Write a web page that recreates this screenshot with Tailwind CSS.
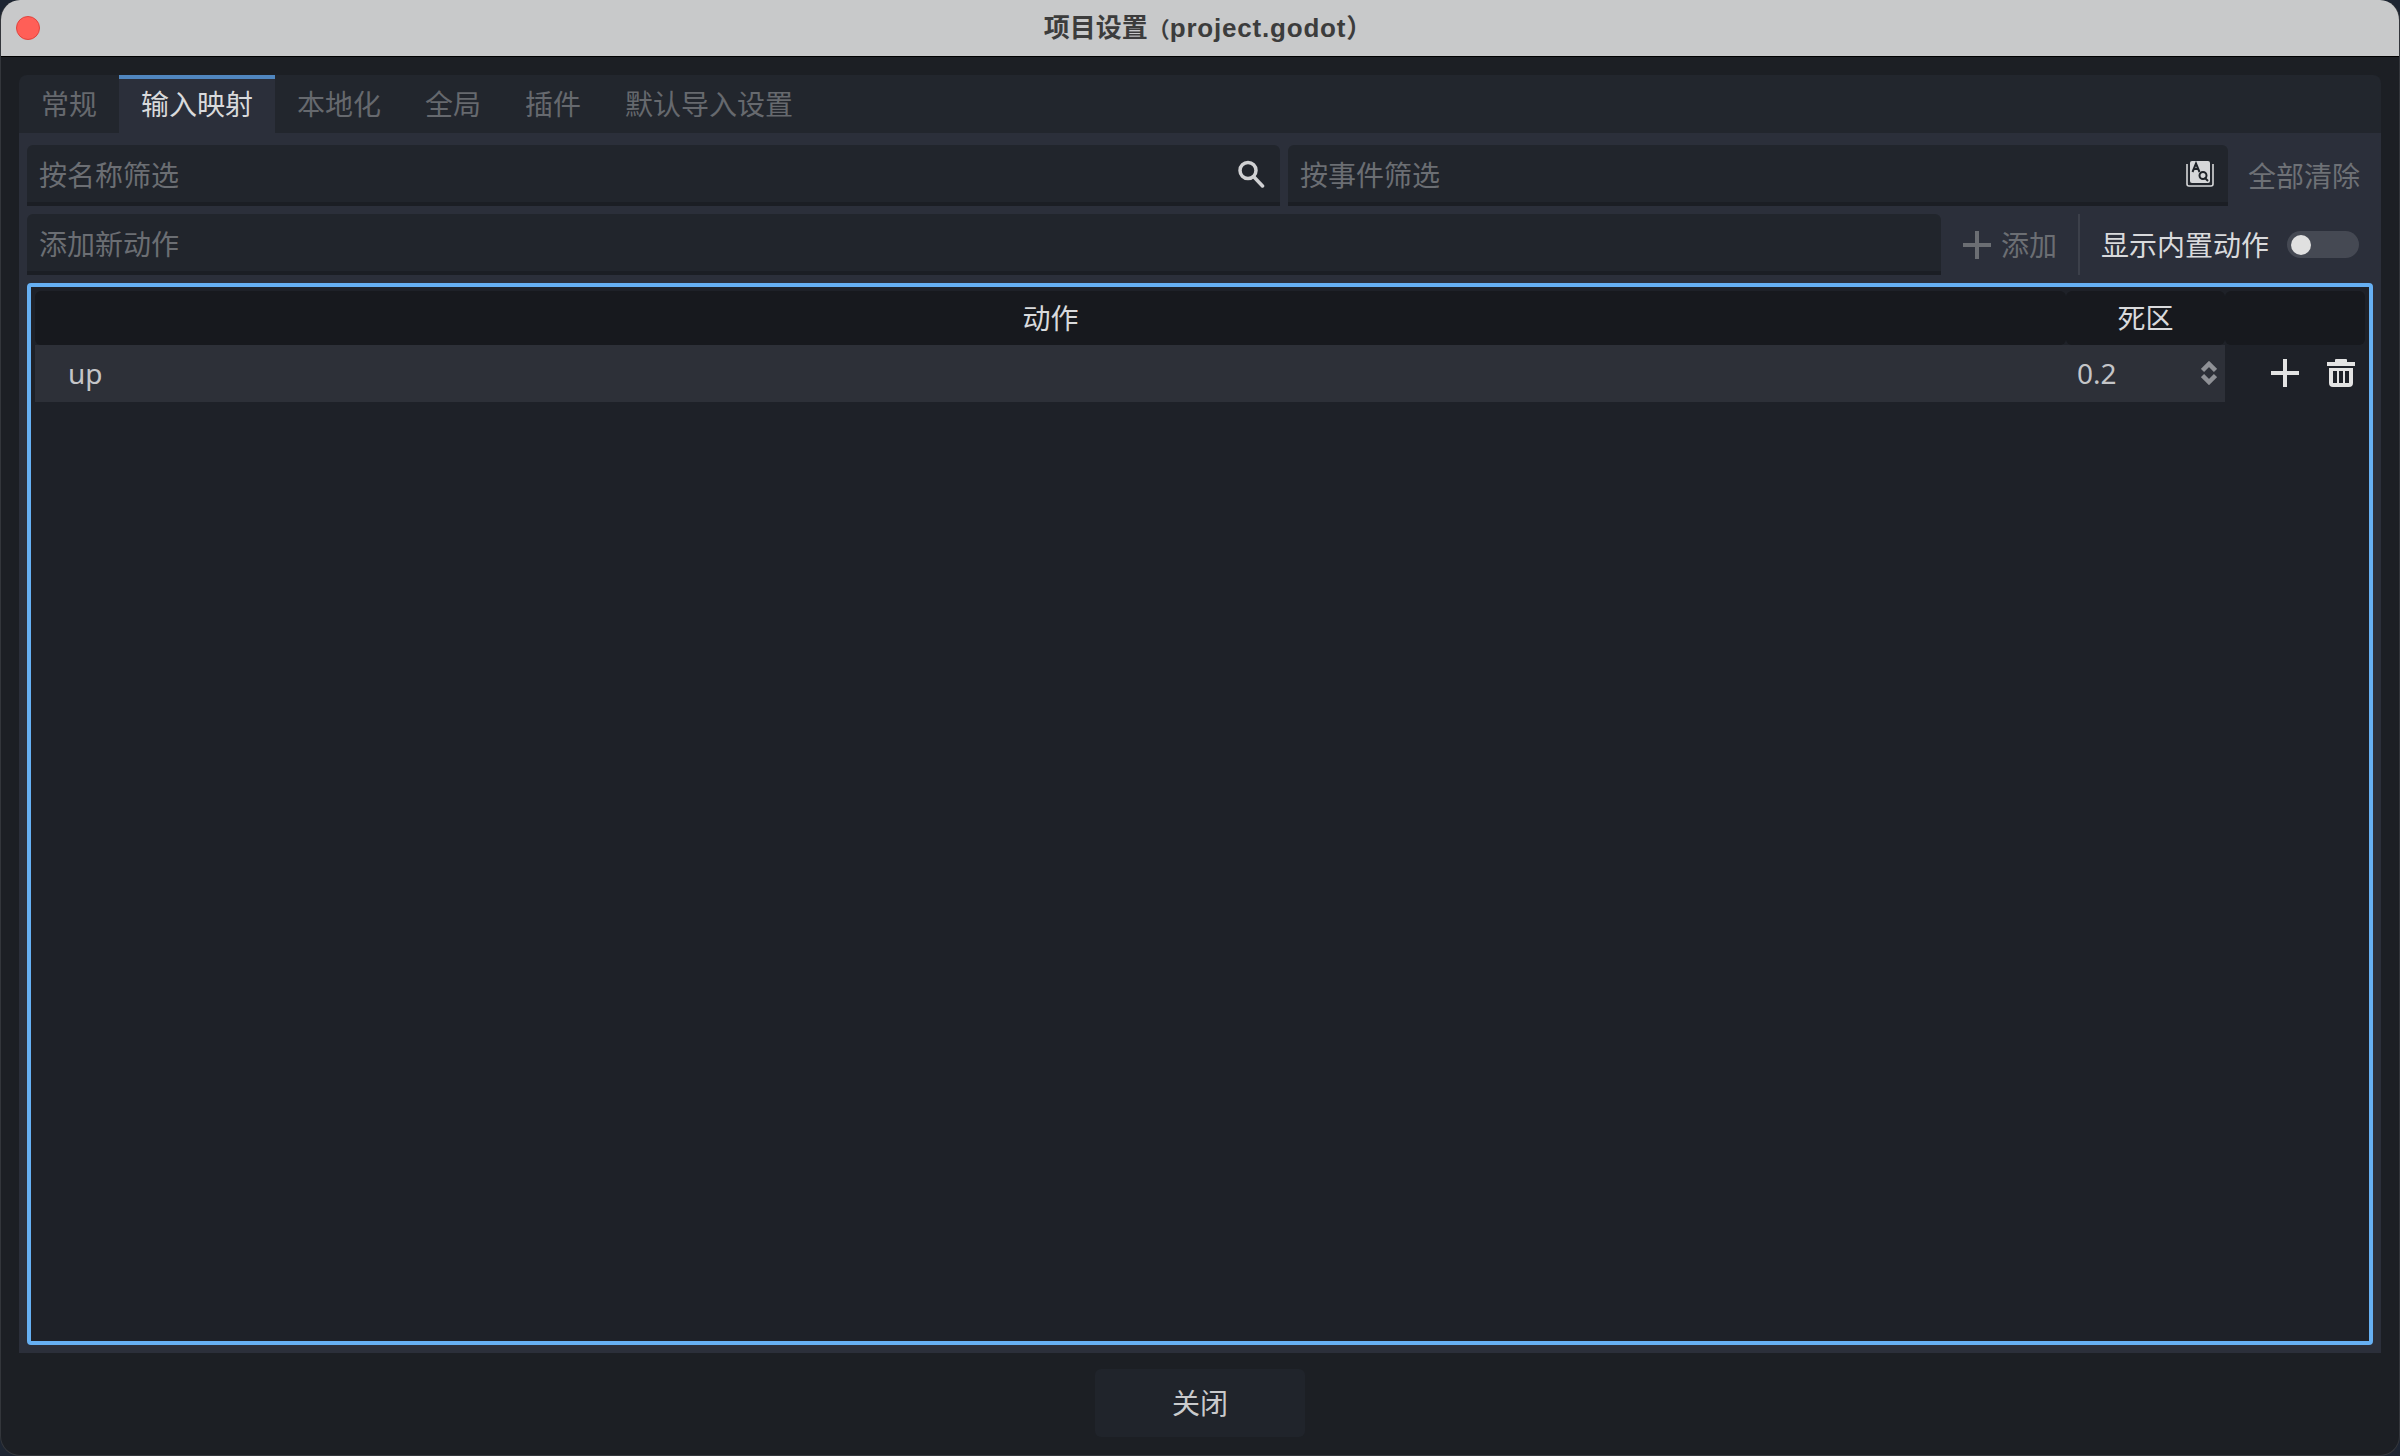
<!DOCTYPE html>
<html lang="zh-CN">
<head>
<meta charset="utf-8">
<script src="https://cdn.jsdelivr.net/npm/@tailwindcss/browser@4"></script>
</head>
<body class="bg-[#1d2532] font-['Noto_Sans','Noto_Sans_CJK_SC',sans-serif] overflow-hidden">
<div class="w-[2400px] h-[1456px] flex flex-col rounded-[20px] overflow-hidden bg-[#1c1f24] text-[28px] leading-none border-b border-x border-[#33363b]">
  <header class="relative h-[57px] shrink-0 flex items-center justify-center bg-[#c8c9ca] border-b border-black -mx-px">
    <span class="absolute left-[16px] top-[16px] w-[24px] h-[24px] rounded-full bg-[#ff5f57] border border-[#e0443e]"></span>
    <span class="ml-[16px] text-[26px] font-bold text-[#3c3c3c] font-['Liberation_Sans','Noto_Sans_CJK_SC',sans-serif]">项目设置<span class="text-[22px]">（</span><span class="tracking-[0.8px]">project.godot</span>）</span>
  </header>
  <div class="flex-1 flex flex-col px-[18px] pt-[18px] pb-[18px]">
    <nav class="h-[58px] shrink-0 flex bg-[#22262d] rounded-t-[8px] text-[#66696e]">
      <div class="px-[22px] flex items-center">常规</div>
      <div class="px-[22px] pb-[4px] flex items-center bg-[#2b2f3a] border-t-4 border-[#5086bf] text-[#d9dadc]">输入映射</div>
      <div class="px-[22px] flex items-center">本地化</div>
      <div class="px-[22px] flex items-center">全局</div>
      <div class="px-[22px] flex items-center">插件</div>
      <div class="px-[22px] flex items-center">默认导入设置</div>
    </nav>
    <main class="h-[1220px] flex flex-col bg-[#2b2f3a] px-[8px] pt-[12px] pb-[8px] gap-[8px]">
      <div class="h-[61px] shrink-0 flex gap-[8px]">
        <div class="w-[1253px] flex items-center justify-between bg-[#21252c] border-b-4 border-[#1b1e24] rounded-t-[6px] pt-[3px] pl-[12px] pr-[15px] text-[#6b6e73]">
          <span>按名称筛选</span>
          <svg class="w-[28px] h-[28px] -mt-[3px]" viewBox="0 0 28 28" fill="none"><circle cx="11" cy="10.5" r="8" stroke="#d0d1d3" stroke-width="3.5"/><path d="M16.5 16.5 25.5 26" stroke="#d0d1d3" stroke-width="3.5" stroke-linecap="round"/></svg>
        </div>
        <div class="w-[940px] flex items-center justify-between bg-[#21252c] border-b-4 border-[#1b1e24] rounded-t-[6px] pt-[3px] pl-[12px] pr-[14px] text-[#6b6e73]">
          <span>按事件筛选</span>
          <svg class="w-[28px] h-[26px] -mt-[3px]" viewBox="0 0 28 26" fill="none"><path d="M1 3v20a2 2 0 0 0 2 2h22a2 2 0 0 0 2-2V3" stroke="#d6d7d9" stroke-width="1.6"/><rect x="4" y="0" width="20" height="22" rx="2" fill="#d6d7d9"/><path d="M6.5 11 10 2.5 13.5 11M8 8h4" stroke="#1f2329" stroke-width="2"/><circle cx="17" cy="14.5" r="3.5" stroke="#1f2329" stroke-width="2"/><path d="M18.5 16.5 22 20" stroke="#1f2329" stroke-width="2"/></svg>
        </div>
        <div class="flex-1 flex items-center justify-end pr-[13px] text-[#6e7176]">全部清除</div>
      </div>
      <div class="h-[61px] shrink-0 flex">
        <div class="w-[1914px] flex items-center bg-[#21252c] border-b-4 border-[#1b1e24] rounded-t-[6px] pt-[3px] pl-[12px] text-[#6b6e73]">添加新动作</div>
        <div class="w-[137px] flex items-center pl-[22px] gap-[10px] text-[#6b6e73]">
          <svg class="w-[28px] h-[28px]" viewBox="0 0 28 28"><path d="M12 0h4v12h12v4H16v12h-4V16H0v-4h12z" fill="#6b6e73"/></svg>
          <span>添加</span>
        </div>
        <div class="w-[2px] bg-[#3c404a]"></div>
        <div class="flex-1 flex items-center pl-[21px] text-[#d9dadc]">
          <span>显示内置动作</span>
          <span class="ml-[18px] w-[72px] h-[27px] rounded-full bg-[#454953] flex items-center pl-[4px]"><span class="w-[20px] h-[20px] rounded-full bg-[#e0e0e0]"></span></span>
        </div>
      </div>
      <section class="flex-1 bg-[#1e2128] border-4 border-[#66b0f3] rounded-[4px] p-[4px] flex flex-col">
        <div class="h-[54px] shrink-0 flex text-[#d9dadc]">
          <div class="w-[2031px] flex items-center justify-center bg-[#17191e] rounded-[6px]">动作</div>
          <div class="w-[159px] flex items-center justify-center bg-[#17191e] rounded-[6px]">死区</div>
          <div class="flex-1 bg-[#17191e] rounded-[6px]"></div>
        </div>
        <div class="h-[57px] shrink-0 flex">
          <div class="w-[2190px] flex items-center justify-between bg-[#2d3038] text-[#c4c5c8] pb-[2px]">
            <span class="pl-[33px]">up</span>
            <div class="flex items-center">
              <span class="w-[124px]">0.2</span>
              <svg class="w-[16px] h-[24px] mr-[8px]" viewBox="0 0 16 24" fill="none" stroke="#8f9196" stroke-width="4.5"><path d="M1.5 9.5 8 3 14.5 9.5M1.5 14.5 8 21 14.5 14.5"/></svg>
            </div>
          </div>
          <div class="flex-1 flex items-center pl-[46px] gap-[28px] pb-[1px]">
            <svg class="w-[28px] h-[28px]" viewBox="0 0 28 28"><path d="M12 0h4v12h12v4H16v12h-4V16H0v-4h12z" fill="#e3e3e3"/></svg>
            <svg class="w-[28px] h-[28px]" viewBox="0 0 28 28" fill="#e3e3e3"><path d="M9 0h10a1 1 0 0 1 1 1v2h8v4H0V3h8V1a1 1 0 0 1 1-1z"/><path fill-rule="evenodd" d="M2 9h24v15a4 4 0 0 1-4 4H6a4 4 0 0 1-4-4zm4 3v12h4V12zm6 0v12h4V12zm6 0v12h4V12z"/></svg>
          </div>
        </div>
      </section>
    </main>
    <div class="flex-1 flex items-end justify-center">
      <button class="w-[210px] h-[68px] bg-[#20242b] rounded-[6px] text-[#c9cacc]">关闭</button>
    </div>
  </div>
</div>
</body>
</html>
